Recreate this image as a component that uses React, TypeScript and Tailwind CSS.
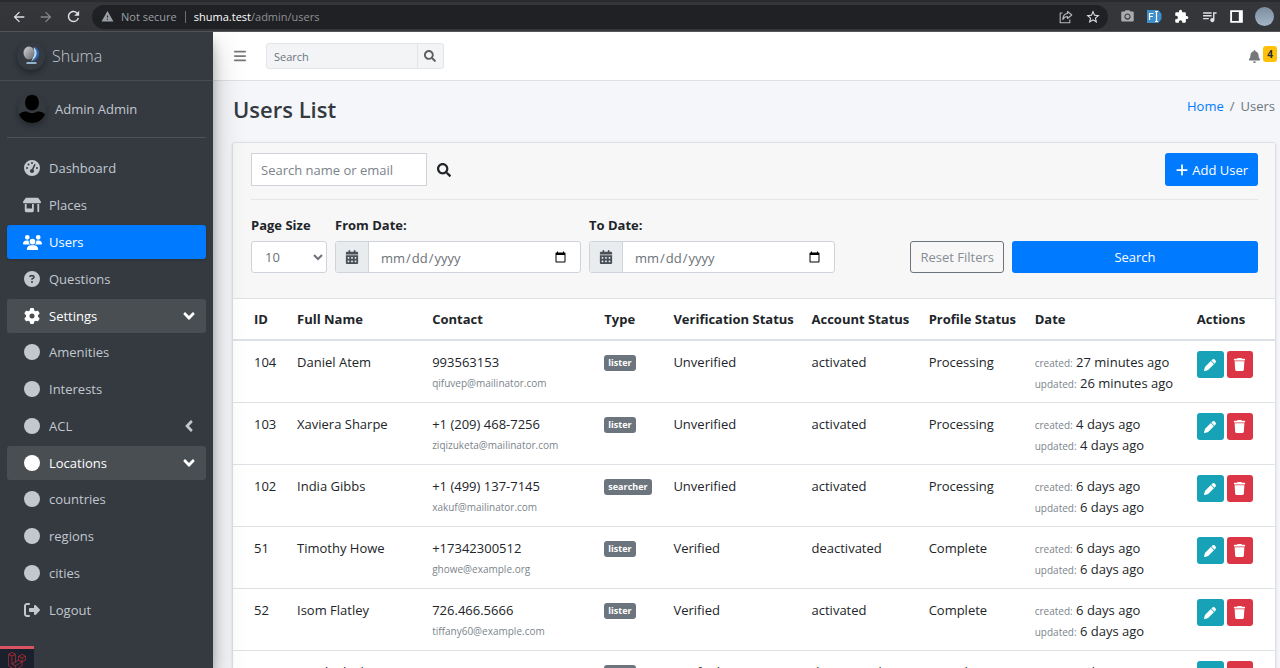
import type { ReactNode } from "react";
import {
  FaGaugeHigh, FaShop, FaUsers, FaCircleQuestion, FaGear, FaCircle, FaRightFromBracket,
  FaBars, FaBell, FaPlus, FaCalendarDays, FaTrash, FaPen,
} from "react-icons/fa6";
import { FaAngleDown, FaAngleLeft, FaSearch } from "react-icons/fa";
import {
  MdArrowBack, MdArrowForward, MdRefresh, MdWarning, MdStarOutline, MdExtension, MdQueueMusic, MdCameraAlt,
} from "react-icons/md";
import { SiLaravel } from "react-icons/si";

type Item = { label: string; icon: ReactNode; active?: boolean; open?: boolean; arrow?: "down" | "left"; children?: Item[] };

const dot = <FaCircle className="size-4" />;

const menu: Item[] = [
  { label: "Dashboard", icon: <FaGaugeHigh className="size-4" /> },
  { label: "Places", icon: <FaShop className="size-[18px]" /> },
  { label: "Users", icon: <FaUsers className="size-[19px]" />, active: true },
  { label: "Questions", icon: <FaCircleQuestion className="size-4" /> },
  {
    label: "Settings", icon: <FaGear className="size-4" />, open: true, arrow: "down",
    children: [
      { label: "Amenities", icon: dot },
      { label: "Interests", icon: dot },
      { label: "ACL", icon: dot, arrow: "left" },
    ],
  },
  {
    label: "Locations", icon: dot, open: true, arrow: "down",
    children: [
      { label: "countries", icon: dot },
      { label: "regions", icon: dot },
      { label: "cities", icon: dot },
    ],
  },
  { label: "Logout", icon: <FaRightFromBracket className="size-4" /> },
];

function NavItem({ item }: { item: Item }) {
  const tone = item.active
    ? "bg-[#007bff] text-white shadow-sm"
    : item.open
      ? "bg-[#494e53] text-white"
      : "text-[#c2c7d0]";
  return (
    <li>
      <a href="#" className={`flex h-[34px] items-center rounded-[3px] pr-2 pl-[14px] ${tone}`}>
        <span className="flex w-[22px] justify-center">{item.icon}</span>
        <span className="ml-[6px] flex-1">{item.label}</span>
        {item.arrow === "down" && <FaAngleDown className="size-[18px]" />}
        {item.arrow === "left" && <FaAngleLeft className="size-[18px]" />}
      </a>
      {item.children && (
        <ul className="mt-[2px] flex flex-col gap-[3px]">
          {item.children.map((c) => <NavItem key={c.label} item={c} />)}
        </ul>
      )}
    </li>
  );
}

type User = {
  id: number; name: string; phone: string; email: string; type: string;
  verification: string; account: string; profile: string; created: string; updated: string;
};

const users: User[] = [
  { id: 104, name: "Daniel Atem", phone: "993563153", email: "qifuvep@mailinator.com", type: "lister", verification: "Unverified", account: "activated", profile: "Processing", created: "27 minutes ago", updated: "26 minutes ago" },
  { id: 103, name: "Xaviera Sharpe", phone: "+1 (209) 468-7256", email: "ziqizuketa@mailinator.com", type: "lister", verification: "Unverified", account: "activated", profile: "Processing", created: "4 days ago", updated: "4 days ago" },
  { id: 102, name: "India Gibbs", phone: "+1 (499) 137-7145", email: "xakuf@mailinator.com", type: "searcher", verification: "Unverified", account: "activated", profile: "Processing", created: "6 days ago", updated: "6 days ago" },
  { id: 51, name: "Timothy Howe", phone: "+17342300512", email: "ghowe@example.org", type: "lister", verification: "Verified", account: "deactivated", profile: "Complete", created: "6 days ago", updated: "6 days ago" },
  { id: 52, name: "Isom Flatley", phone: "726.466.5666", email: "tiffany60@example.com", type: "lister", verification: "Verified", account: "activated", profile: "Complete", created: "6 days ago", updated: "6 days ago" },
  { id: 53, name: "Kendrick Thompson", phone: "651.203.4471", email: "kendrick@example.com", type: "lister", verification: "Verified", account: "deactivated", profile: "Complete", created: "6 days ago", updated: "6 days ago" },
];

function BrowserBar() {
  return (
    <header className="flex h-8 shrink-0 items-center border-t-2 border-b border-t-[#2a2b2e] border-b-[#55565a] bg-[#35363a] pr-[6px] pl-[11px] text-[#dee1e6]">
      <button aria-label="Back"><MdArrowBack className="size-4" /></button>
      <button aria-label="Forward" className="ml-[11px] text-[#85878a]"><MdArrowForward className="size-4" /></button>
      <button aria-label="Reload" className="ml-[11px]"><MdRefresh className="size-[17px]" /></button>
      <div className="ml-[10px] flex h-6 flex-1 items-center rounded-full bg-[#202124] pr-[7px] pl-[9px] text-[11px]">
        <MdWarning className="size-[13px] text-[#9aa0a6]" />
        <span className="ml-[7px] text-[#9aa0a6]">Not secure</span>
        <span className="mx-2 h-3 w-px bg-[#6b6e72]" />
        <span className="flex-1 text-[#8d9196]"><span className="text-white">shuma.test</span>/admin/users</span>
        <svg viewBox="0 0 14 14" className="size-[14px]" fill="none" stroke="#b5b8bc" strokeWidth="1.100" strokeLinejoin="round" role="img" aria-label="Share">
          <path d="M3.500 3H1.200v9.800h9.600V9.500" />
          <path d="M8.500 1.500 12.800 5 8.500 8.500V6.500C6 6.500 4.800 7.500 3.800 9.500 4 6 5.500 3.800 8.500 3.500z" />
        </svg>
        <MdStarOutline className="ml-3 size-4" />
      </div>
      <div className="ml-3 flex items-center gap-3">
        <MdCameraAlt className="size-[15px] text-[#a9abae]" />
        <svg viewBox="0 0 15 15" className="size-[15px]" role="img" aria-label="Font extension">
          <path d="M0 1h11.500l3 4v5l-3 4H0z" fill="#3f8fca" />
          <path d="M2.500 11V4.500h4M2.500 7.500h3.500M8 2.500h3M9.500 2.500v10M8 12.500h3" stroke="#fff" strokeWidth="1.200" fill="none" />
        </svg>
        <MdExtension className="size-[15px] text-white" />
        <MdQueueMusic className="size-[17px]" />
        <svg viewBox="0 0 14 14" className="size-[13px]"><path d="M1.200 1.200h11.600v11.600H1.200z" fill="none" stroke="#fff" strokeWidth="2" /><path d="M9.500 1H13v12H9.500z" fill="#fff" /></svg>
        <span className="size-[19px] rounded-full bg-linear-to-b from-[#7d8da0] to-[#a5b5c8]" />
      </div>
    </header>
  );
}

function Sidebar() {
  return (
    <aside className="relative z-10 w-[213px] shrink-0 bg-[#343a40] text-[#c2c7d0] shadow-[0_14px_28px_rgba(0,0,0,.25),0_10px_10px_rgba(0,0,0,.22)]">
      <a href="#" className="flex h-[49px] items-center border-b border-[#454c53] pl-[17px]">
        <svg viewBox="0 0 28 28" className="size-7 rounded-full shadow-[0_3px_6px_rgba(0,0,0,.35)]" role="img" aria-label="Shuma logo">
          <defs>
            <linearGradient id="orb" x1="0" y1="0" x2="1" y2="1"><stop offset="0" stopColor="#d5d6d9" /><stop offset="1" stopColor="#62656c" /></linearGradient>
          </defs>
          <path d="M18 4.500c6 3.500 6 12-2.500 15.500 3-3 4.500-9 2.500-15.500z" fill="#2d62a8" />
          <path d="M16.500 5c5 4 4 10.500-2.500 14.500 2-3 4-8 2.500-14.500z" fill="#b5dbf7" />
          <ellipse cx="12" cy="11" rx="5.500" ry="6.500" fill="url(#orb)" />
          <path d="M9.500 21h10" stroke="#b5dbf7" strokeWidth="1.400" />
        </svg>
        <span className="ml-[7px] text-[16px] font-light">Shuma</span>
      </a>
      <div className="px-[7px]">
        <div className="flex h-[57px] items-center border-b border-[#4b545c] pl-[11px]">
          <svg viewBox="0 0 28 28" className="size-7 rounded-full shadow-[0_3px_6px_rgba(0,0,0,.3)]" role="img" aria-label="Admin avatar">
            <ellipse cx="14" cy="7.500" rx="7" ry="8" fill="#000" />
            <path d="M.5 20c2-3 6-4 8.500-3.500 3 2 7 2 10 0 3-.5 6.500.5 8.500 3.500-2 5-7 8.500-13.500 8.500S2.500 25 .5 20z" fill="#000" />
          </svg>
          <a href="#" className="ml-[9px]">Admin Admin</a>
        </div>
        <nav aria-label="Main">
          <ul className="mt-[13px] flex flex-col gap-[3px]">
            {menu.map((m) => <NavItem key={m.label} item={m} />)}
          </ul>
        </nav>
      </div>
    </aside>
  );
}

function DateField({ id, label }: { id: string; label: string }) {
  return (
    <div className="w-[246px]">
      <label htmlFor={id} className="block font-bold">{label}</label>
      <div className="mt-[6px] flex h-8 overflow-hidden rounded-[3px] border border-[#ced4da] bg-white">
        <span className="flex w-[33px] items-center justify-center border-r border-[#ced4da] bg-[#e9ecef] text-[#495057]"><FaCalendarDays className="size-[14px]" /></span>
        <input id={id} type="date" className="min-w-0 flex-1 px-[11px] pt-px text-[#6b7278] outline-none" />
      </div>
    </div>
  );
}

function Filters() {
  return (
    <form className="border-b border-[#dfe1e3] bg-[#f7f7f7] pt-[10px] pr-[17px] pb-[25px] pl-[18px]" onSubmit={(e) => e.preventDefault()}>
      <div className="flex items-center">
        <input aria-label="Search name or email" placeholder="Search name or email" className="h-[33px] w-44 border border-[#ced4da] bg-white px-[9px] placeholder:text-[#7a838b]" />
        <button aria-label="Find user" className="ml-[10px]"><FaSearch className="size-[14px]" /></button>
        <button className="ml-auto flex h-[33px] items-center gap-[3px] rounded-[3px] bg-[#007bff] px-[10px] text-white"><FaPlus className="size-[14px]" />Add User</button>
      </div>
      <hr className="mt-[13px] border-[#e6e6e6]" />
      <div className="mt-[15px] flex items-end gap-2">
        <div className="w-[76px]">
          <label htmlFor="page-size" className="block whitespace-nowrap font-bold">Page Size</label>
          <select id="page-size" defaultValue="10" className="mt-[6px] block h-8 w-full rounded-[3px] border border-[#ced4da] bg-white pl-[9px] text-[#6b7278]">
            <option>10</option><option>25</option><option>50</option>
          </select>
        </div>
        <DateField id="from-date" label="From Date:" />
        <DateField id="to-date" label="To Date:" />
        <button type="reset" className="ml-auto h-8 rounded-[3px] border border-[#6c757d] px-[9px] text-[#868e95]">Reset Filters</button>
        <button className="h-8 w-[246px] rounded-[3px] bg-[#007bff] text-white">Search</button>
      </div>
    </form>
  );
}

function UsersTable() {
  return (
    <table className="w-full table-fixed bg-white text-left">
      <colgroup>
        <col className="w-[54px]" /><col className="w-[135px]" /><col className="w-[172px]" />
        <col className="w-[69px]" /><col className="w-[138px]" /><col className="w-[117px]" />
        <col className="w-[106px]" /><col className="w-[162px]" /><col className="w-[88px]" />
      </colgroup>
      <thead>
        <tr className="h-[41px] border-b-2 border-[#dee2e6] whitespace-nowrap">
          <th className="pl-[21px]">ID</th>
          {["Full Name", "Contact", "Type", "Verification Status", "Account Status", "Profile Status", "Date", "Actions"].map((h) => (
            <th key={h} className="pl-[10px]">{h}</th>
          ))}
        </tr>
      </thead>
      <tbody>
        {users.map((u) => (
          <tr key={u.id} className="border-b border-[#dee2e6] align-top whitespace-nowrap leading-[21px]">
            <td className="pt-[11px] pl-[21px]">{u.id}</td>
            <td className="pt-[11px] pl-[10px]">{u.name}</td>
            <td className="pt-[11px] pb-2 pl-[10px]">{u.phone}<small className="block text-[10px] leading-[21px] text-[#7b848c]">{u.email}</small></td>
            <td className="pt-[11px] pl-[10px]"><span className="block w-fit rounded-[3px] bg-[#6c757d] px-1 mt-[3px] text-[9px] leading-4 font-bold text-white">{u.type}</span></td>
            <td className="pt-[11px] pl-[10px]">{u.verification}</td>
            <td className="pt-[11px] pl-[10px]">{u.account}</td>
            <td className="pt-[11px] pl-[10px]">{u.profile}</td>
            <td className="pt-[11px] pb-2 pl-[10px]">
              <div><small className="text-[10px] leading-none text-[#7b848c]">created:</small> {u.created}</div>
              <div><small className="text-[10px] leading-none text-[#7b848c]">updated:</small> {u.updated}</div>
            </td>
            <td className="pt-[10px] pl-[10px]">
              <div className="flex gap-[3px] text-white">
                <button aria-label={`Edit ${u.name}`} className="flex h-[27px] w-[27px] items-center justify-center rounded-[3px] bg-[#17a2b8]"><FaPen className="size-3" /></button>
                <button aria-label={`Delete ${u.name}`} className="flex h-[27px] w-[26px] items-center justify-center rounded-[3px] bg-[#dc3545]"><FaTrash className="size-[13px]" /></button>
              </div>
            </td>
          </tr>
        ))}
      </tbody>
    </table>
  );
}

export default function App() {
  return (
    <div className="flex h-screen flex-col overflow-hidden bg-[#f4f6f9] font-['Open_Sans',sans-serif] text-[13px] leading-[20px] text-[#212529]">
      <BrowserBar />
      <div className="flex min-h-0 flex-1">
        <Sidebar />
        <div className="min-w-0 flex-1">
          <div className="flex h-[49px] items-center border-b border-[#dee2e6] bg-white pr-[3px] pl-5 text-[#75777a]">
            <button aria-label="Toggle menu"><FaBars className="size-[14px]" /></button>
            <form className="ml-[19px] flex h-[26px] rounded-[3px] border border-[#e3e5e8] bg-[#f2f4f6] text-[11px]" onSubmit={(e) => e.preventDefault()}>
              <input aria-label="Search" placeholder="Search" className="w-[150px] px-[7px] pt-px placeholder:text-[#6c757d]" />
              <button aria-label="Submit search" className="w-[26px] border-l border-[#e3e5e8] pl-[6px] text-[#5c5f62]"><FaSearch className="size-3" /></button>
            </form>
            <button aria-label="Notifications, 4 new" className="ml-auto flex items-start gap-[2px] pb-[3px]">
              <FaBell className="mt-1 size-[13px]" />
              <span className="rounded-[3px] bg-[#ffc107] px-1 text-[10px] leading-4 font-bold text-[#1f2d3d]">4</span>
            </button>
          </div>
          <div className="flex items-start justify-between pt-[10px] pr-[5px] pl-5">
            <h1 className="text-[22px] leading-9 font-semibold text-[#343a40]">Users List</h1>
            <ol className="flex gap-[6px] pt-[5px] text-[#6c757d]" aria-label="Breadcrumb">
              <li><a href="#" className="text-[#007bff]">Home</a></li>
              <li aria-hidden="true">/</li>
              <li>Users</li>
            </ol>
          </div>
          <main className="mt-[15px] mr-1 ml-[19px] overflow-hidden rounded-t-[3px] border border-[#dcdfe3] shadow-sm">
            <Filters />
            <UsersTable />
          </main>
        </div>
      </div>
      <button aria-label="Open debug bar" className="fixed bottom-0 left-0 z-20 flex h-[22px] w-[34px] items-start justify-center border-t-[3px] border-[#dc5361] bg-[#1a202c] pt-[3px] text-[#d9323c]">
        <SiLaravel className="size-[18px] shrink-0" />
      </button>
    </div>
  );
}
